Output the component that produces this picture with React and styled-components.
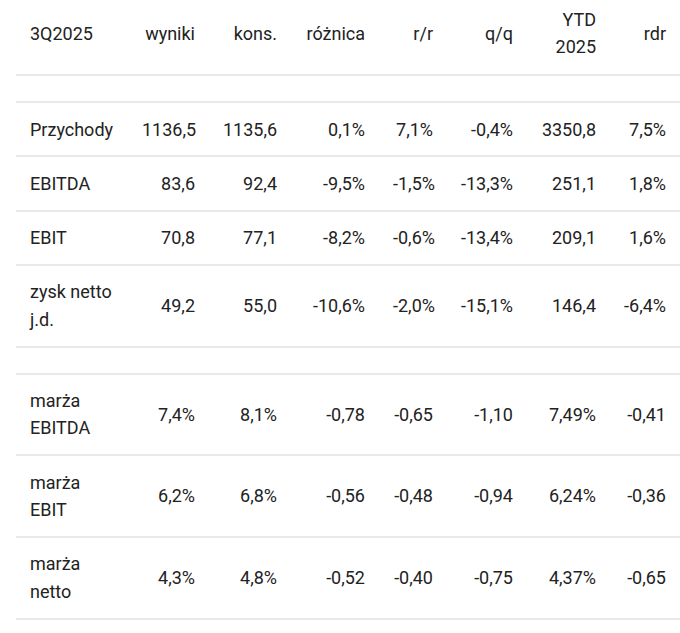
import React from 'react';
import styled, { createGlobalStyle } from 'styled-components';

const GlobalStyle = createGlobalStyle`
  html, body {
    margin: 0;
    padding: 0;
    background: #ffffff;
  }
  body {
    font-family: Roboto, "Noto Sans", "Liberation Sans", sans-serif;
    color: #222222;
    overflow: hidden;
  }
`;

const Wrap = styled.div`
  padding-left: 16px;
  width: 664px;
`;

const Table = styled.table`
  width: 664px;
  border-collapse: collapse;
  table-layout: fixed;
  font-size: 18px;
  line-height: 27.4px;
`;

const Row = styled.tr`
  border-bottom: 2px solid #e9e9e9;
`;

const Cell = styled.td`
  padding: 12.45px 14px;
  text-align: ${p => (p.$label ? 'left' : 'right')};
  vertical-align: middle;
  white-space: ${p => (p.$label ? 'normal' : 'nowrap')};
  font-weight: 400;
`;

const HeadCell = styled(Cell).attrs({ as: 'th' })`
  padding: 6px 14px 13.5px;
`;

const widths = [112, 81, 82, 88, 68, 80, 83, 70];

const header = ['3Q2025', 'wyniki', 'kons.', 'różnica', 'r/r', 'q/q', ['YTD', '2025'], 'rdr'];

const groups = [
  [
    ['Przychody', '1136,5', '1135,6', '0,1%', '7,1%', '-0,4%', '3350,8', '7,5%'],
    ['EBITDA', '83,6', '92,4', '-9,5%', '-1,5%', '-13,3%', '251,1', '1,8%'],
    ['EBIT', '70,8', '77,1', '-8,2%', '-0,6%', '-13,4%', '209,1', '1,6%'],
    ['zysk netto j.d.', '49,2', '55,0', '-10,6%', '-2,0%', '-15,1%', '146,4', '-6,4%'],
  ],
  [
    ['marża EBITDA', '7,4%', '8,1%', '-0,78', '-0,65', '-1,10', '7,49%', '-0,41'],
    ['marża EBIT', '6,2%', '6,8%', '-0,56', '-0,48', '-0,94', '6,24%', '-0,36'],
    ['marża netto', '4,3%', '4,8%', '-0,52', '-0,40', '-0,75', '4,37%', '-0,65'],
  ],
];

const EmptyRow = () => (
  <Row>
    {widths.map((_, i) => (
      <Cell key={i} $label={i === 0} />
    ))}
  </Row>
);

export default function App() {
  return (
    <>
      <GlobalStyle />
      <Wrap>
        <Table>
          <colgroup>
            {widths.map((w, i) => (
              <col key={i} style={{ width: `${w}px` }} />
            ))}
          </colgroup>
          <thead>
            <Row>
              {header.map((h, i) => (
                <HeadCell key={i} $label={i === 0}>
                  {Array.isArray(h) ? (
                    <>
                      {h[0]}
                      <br />
                      {h[1]}
                    </>
                  ) : (
                    h
                  )}
                </HeadCell>
              ))}
            </Row>
          </thead>
          <tbody>
            {groups.map((rows, g) => (
              <React.Fragment key={g}>
                <EmptyRow />
                {rows.map(r => (
                  <Row key={r[0]}>
                    {r.map((v, i) => (
                      <Cell key={i} $label={i === 0}>{v}</Cell>
                    ))}
                  </Row>
                ))}
              </React.Fragment>
            ))}
          </tbody>
        </Table>
      </Wrap>
    </>
  );
}
